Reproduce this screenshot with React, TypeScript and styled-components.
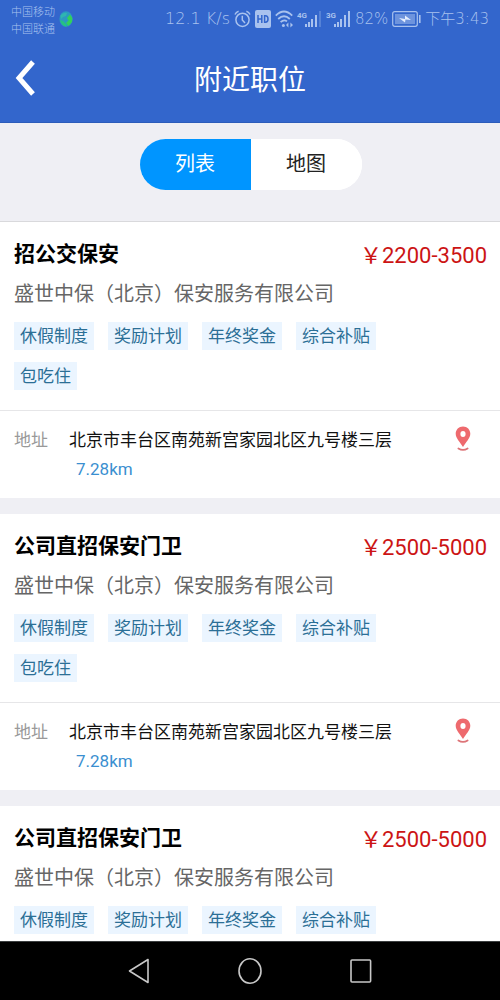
import React, { useState } from "react";
import styled, { createGlobalStyle } from "styled-components";

const GlobalStyle = createGlobalStyle`
  *, *::before, *::after { box-sizing: border-box; }
  body {
    margin: 0;
    background: #efeff4;
    font-family: Roboto, "Noto Sans CJK SC", sans-serif;
  }
  h1, h2, p, ul { margin: 0; padding: 0; font-weight: 400; }
  ul { list-style: none; }
  button { font: inherit; border: 0; padding: 0; background: none; cursor: pointer; }
  svg { display: block; flex: none; }
`;

const Screen = styled.div`
  display: flex;
  flex-direction: column;
  height: 100vh;
`;

const Header = styled.header`
  flex: none;
  background: #3366cc;
  border-bottom: 1px solid #2b5cba;
  color: #fff;
`;

const StatusBar = styled.div`
  display: flex;
  align-items: center;
  height: 38px;
  padding: 0 11px;
  color: #a9c2ee;
`;

const Carriers = styled.div`
  display: flex;
  flex-direction: column;
  margin-right: 4px;
  padding-top: 3px;
  font-size: 11px;
  font-weight: 300;
  line-height: 17px;
`;

const StatusItems = styled.div`
  display: flex;
  align-items: center;
  gap: 4px;
  margin-left: auto;
  white-space: nowrap;
`;

const StatusText = styled.span<{ $size?: number }>`
  font-family: "DejaVu Sans", "Noto Sans CJK SC", sans-serif;
  font-size: ${(p) => p.$size ?? 15}px;
  font-weight: 200;
  line-height: 20px;
`;

const TitleBar = styled.div`
  display: grid;
  grid-template-columns: 56px 1fr 56px;
  align-items: center;
  height: 84px;
`;

const BackButton = styled.button`
  display: flex;
  align-items: center;
  height: 56px;
  padding: 0 0 4px 15px;
  color: #fff;
`;

const PageTitle = styled.h1`
  font-size: 28px;
  line-height: 44px;
  padding-top: 2px;
  text-align: center;
`;

const SwitchBar = styled.div`
  flex: none;
  display: flex;
  justify-content: center;
  padding: 16px 13px 31px 14px;
  border-bottom: 1px solid #d9d9dc;
`;

const Segments = styled.div`
  display: flex;
  width: 222px;
  border-radius: 26px;
  overflow: hidden;
  background: #fff;
`;

const Segment = styled.button<{ $active: boolean }>`
  flex: 1;
  height: 51px;
  padding-bottom: 4px;
  font-size: 20px;
  color: ${(p) => (p.$active ? "#fff" : "#222")};
  background: ${(p) => (p.$active ? "#0095ff" : "#fff")};
`;

const JobList = styled.ul`
  flex: 1;
  min-height: 0;
  display: flex;
  flex-direction: column;
  gap: 16px;
  overflow-y: auto;
  scrollbar-width: none;
`;

const Card = styled.li`
  flex: none;
  background: #fff;
`;

const Summary = styled.div`
  padding: 16px 13px 20px 14px;
`;

const TitleRow = styled.div`
  display: flex;
  justify-content: space-between;
  align-items: center;
`;

const JobTitle = styled.h2`
  font-size: 21px;
  font-weight: 700;
  line-height: 32px;
  color: #000;
`;

const Salary = styled.span`
  padding-top: 4px;
  font-size: 22px;
  line-height: 28px;
  color: #cc1414;
`;

const Company = styled.p`
  margin: 10px 0 14px;
  font-size: 20px;
  line-height: 28px;
  color: #666;
  white-space: nowrap;
`;

const Tags = styled.ul`
  display: flex;
  flex-wrap: wrap;
  gap: 12px 14px;
  padding-right: 80px;
`;

const Tag = styled.li`
  padding: 0 6px;
  font-size: 17px;
  line-height: 28px;
  color: #2b6f96;
  background: #ebf5ff;
`;

const Location = styled.div`
  display: grid;
  grid-template-columns: 55px 1fr 48px;
  padding: 15px 13px 15px 14px;
  border-top: 1px solid #e6e6e8;
  font-size: 17px;
  line-height: 28px;
`;

const Label = styled.span`
  color: #999;
`;

const Address = styled.p`
  color: #111;
  white-space: nowrap;
`;

const Distance = styled.p`
  padding: 1px 0 0 7px;
  color: #3a8fd0;
`;

const PinButton = styled.button`
  display: flex;
  justify-content: center;
  height: 28px;
`;

const NavBar = styled.nav`
  flex: none;
  display: flex;
  justify-content: center;
  gap: 87px;
  height: 59px;
  background: #000;
  border-top: 1px solid #3c3f40;
`;

const NavButton = styled.button`
  display: flex;
  align-items: center;
`;

const Globe = () => (
  <svg width="14" height="16" viewBox="0 0 14 16">
    <ellipse cx="7" cy="8" rx="6.6" ry="7.8" fill="#2b9ac0" />
    <path d="M1.5 4.5 Q4 1 8 2 L7 5 L4 6 L2 8Z" fill="#2fb5b0" />
    <path d="M1 9 L4 10 L7 13 L8 15.6 Q2.5 15.6 1 9Z" fill="#24c283" />
    <path d="M8 7 L11 3.5 L13.4 7 L13 11 L9.5 15 L7 12 L9.5 9.5Z" fill="#32d05a" />
  </svg>
);

const Alarm = () => (
  <svg width="17" height="18" viewBox="0 0 17 18" fill="none" stroke="currentColor" strokeWidth="1.5">
    <circle cx="8.5" cy="9.8" r="6.6" />
    <path d="M1 4.5 Q2 2 4.6 1.2 M16 4.5 Q15 2 12.4 1.2 M8.3 5.8 V10 L11 13" />
  </svg>
);

const Hd = () => (
  <svg width="16" height="18" viewBox="0 0 16 18">
    <rect width="16" height="18" rx="2" fill="currentColor" />
    <path d="M3 5 V13 M6.8 5 V13 M3 9 H6.8 M9.6 5.8 V12.2 H10.4 Q13 12.2 13 9 Q13 5.8 10.4 5.8Z" fill="none" stroke="#3366cc" strokeWidth="1.5" />
  </svg>
);

const Wifi = () => (
  <svg width="18" height="18" viewBox="0 0 18 18" fill="none" stroke="currentColor" strokeWidth="1.8">
    <path d="M0.8 5.6 Q9 -2.5 17.2 5.6 M3.2 9 Q9 3.4 14.8 9 M5.6 12.2 Q9 9 12 11.4" />
    <circle cx="8.4" cy="15.4" r="1.5" fill="currentColor" stroke="none" />
    <path d="M11 15 L13.4 12.6 V17.4Z M18 15 L15.4 12.6 V17.4Z" fill="currentColor" stroke="none" />
  </svg>
);

const Signal = ({ label, weak }: { label: string; weak?: boolean }) => (
  <svg width="25" height="18" viewBox="0 0 25 18" fill="currentColor">
    <text x="0" y="8" fontFamily="Roboto, sans-serif" fontSize="8" fontWeight="700">{label}</text>
    <rect x="8" y="14" width="2" height="3" />
    <rect x="11" y="12" width="2" height="5" />
    <rect x="14" y="9" width="2" height="8" />
    <rect x="18" y="5" width="2" height="12" />
    <rect x="22" y="1" width="2" height="16" opacity={weak ? 0.3 : 1} />
  </svg>
);

const Battery = () => (
  <svg width="29" height="16" viewBox="0 0 29 16">
    <rect x="0.7" y="0.7" width="24.6" height="14.6" rx="2" fill="none" stroke="currentColor" strokeWidth="1.2" />
    <rect x="3" y="3" width="20" height="10" fill="currentColor" opacity="0.5" />
    <path d="M7 7 L13 8 L13 4.5 L19 9 L13.5 8.6 L13 11.5Z" fill="#e6efff" />
    <rect x="27" y="4" width="1.6" height="8" fill="currentColor" />
  </svg>
);

const Pin = () => (
  <svg width="16" height="26" viewBox="0 0 16 26">
    <path fillRule="evenodd" fill="#ee6a6e" d="M8 0.5 C3.8 0.5 0.7 3.7 0.7 7.8 C0.7 12.2 5 16.2 8 21 C11 16.2 15.3 12.2 15.3 7.8 C15.3 3.7 12.2 0.5 8 0.5Z M8 5 A2.6 3 0 1 1 8 11 A2.6 3 0 1 1 8 5Z" />
    <path d="M3.4 22.4 Q8 25.4 12.6 22.4" fill="none" stroke="#dd7478" strokeWidth="1.8" strokeLinecap="round" />
  </svg>
);

const tags = ["休假制度", "奖励计划", "年终奖金", "综合补贴", "包吃住"];

const shared = {
  company: "盛世中保（北京）保安服务有限公司",
  address: "北京市丰台区南苑新宫家园北区九号楼三层",
  distance: "7.28km",
};

const jobs = [
  { id: 1, title: "招公交保安", salary: "￥2200-3500", ...shared },
  { id: 2, title: "公司直招保安门卫", salary: "￥2500-5000", ...shared },
  { id: 3, title: "公司直招保安门卫", salary: "￥2500-5000", ...shared },
];

const views = ["列表", "地图"];

export default function App() {
  const [view, setView] = useState(views[0]);

  return (
    <Screen>
      <GlobalStyle />
      <Header>
        <StatusBar>
          <Carriers>
            <span>中国移动</span>
            <span>中国联通</span>
          </Carriers>
          <Globe />
          <StatusItems>
            <StatusText $size={16}>12.1 K/s</StatusText>
            <Alarm />
            <Hd />
            <Wifi />
            <Signal label="4G" weak />
            <Signal label="3G" />
            <StatusText>82%</StatusText>
            <Battery />
            <StatusText>下午3:43</StatusText>
          </StatusItems>
        </StatusBar>
        <TitleBar>
          <BackButton aria-label="返回">
            <svg width="20" height="36" viewBox="0 0 20 36" fill="none" stroke="currentColor" strokeWidth="5">
              <path d="M18 2 L4 18 L18 34" />
            </svg>
          </BackButton>
          <PageTitle>附近职位</PageTitle>
        </TitleBar>
      </Header>

      <SwitchBar>
        <Segments>
          {views.map((name) => (
            <Segment key={name} $active={name === view} aria-pressed={name === view} onClick={() => setView(name)}>
              {name}
            </Segment>
          ))}
        </Segments>
      </SwitchBar>

      <JobList>
        {jobs.map((job) => (
          <Card key={job.id}>
            <Summary>
              <TitleRow>
                <JobTitle>{job.title}</JobTitle>
                <Salary>{job.salary}</Salary>
              </TitleRow>
              <Company>{job.company}</Company>
              <Tags>
                {tags.map((tag) => (
                  <Tag key={tag}>{tag}</Tag>
                ))}
              </Tags>
            </Summary>
            <Location>
              <Label>地址</Label>
              <div>
                <Address>{job.address}</Address>
                <Distance>{job.distance}</Distance>
              </div>
              <PinButton aria-label="查看位置">
                <Pin />
              </PinButton>
            </Location>
          </Card>
        ))}
      </JobList>

      <NavBar>
        <NavButton aria-label="后退">
          <svg width="24" height="28" viewBox="0 0 24 28" fill="none" stroke="#c8c8c8" strokeWidth="1.6" strokeLinejoin="round">
            <path d="M21 2.5 V25.5 L2.5 14Z" />
          </svg>
        </NavButton>
        <NavButton aria-label="主页">
          <svg width="24" height="28" viewBox="0 0 24 28" fill="none" stroke="#c8c8c8" strokeWidth="1.6">
            <ellipse cx="12" cy="14" rx="11" ry="12.2" />
          </svg>
        </NavButton>
        <NavButton aria-label="最近任务">
          <svg width="24" height="28" viewBox="0 0 24 28" fill="none" stroke="#c8c8c8" strokeWidth="1.6">
            <rect x="2" y="3" width="19.6" height="22" rx="1" />
          </svg>
        </NavButton>
      </NavBar>
    </Screen>
  );
}
